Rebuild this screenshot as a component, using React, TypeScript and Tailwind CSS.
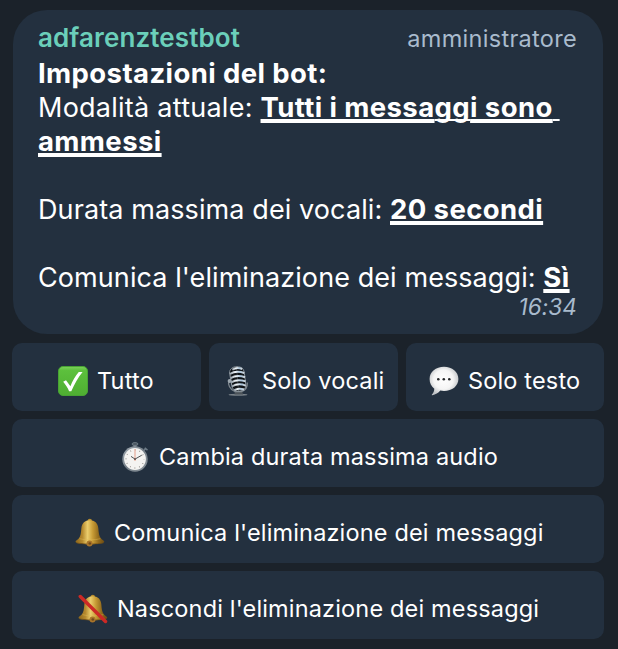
import type { ReactNode } from "react";

function CheckIcon() {
  return (
    <svg width="30" height="30" viewBox="0 0 30 30" className="block shrink-0">
      <defs>
        <linearGradient id="check-bg" x1="0" y1="0" x2="0" y2="1">
          <stop offset="0" stopColor="#7fd35c" />
          <stop offset="0.14" stopColor="#5cc03c" />
          <stop offset="1" stopColor="#4fae32" />
        </linearGradient>
      </defs>
      <rect x="0.5" y="0.5" width="29" height="29" rx="4.5" fill="url(#check-bg)" stroke="#48a334" />
      <path d="M5.200 15.800 8 14.200 12.400 20.200C14.500 14.700 17.500 9.600 20.800 6h3.800C20 11.500 16.500 18 13.300 25.200h-2.200C9.600 21.700 7.600 18.600 5.200 15.800Z" fill="#fff" />
    </svg>
  );
}

function MicIcon() {
  return (
    <svg width="22" height="30" viewBox="0 0 22 30" className="block shrink-0">
      <defs>
        <linearGradient id="mic-bar" x1="0" y1="0" x2="1" y2="0">
          <stop offset="0" stopColor="#8e9aa5" />
          <stop offset="0.35" stopColor="#f4f8fb" />
          <stop offset="0.7" stopColor="#a9c3da" />
          <stop offset="1" stopColor="#d3dae0" />
        </linearGradient>
      </defs>
      <ellipse cx="11" cy="28.800" rx="9.500" ry="1" fill="#777f86" />
      <path d="M8 24h7l1 4.500H7.500Z" fill="#4b5258" />
      <path d="M1.800 14.500c-1 4 1 9 6 11h7c4-1.500 5.700-4.500 5.500-9" fill="none" stroke="#7d868d" strokeWidth="1.300" />
      <path d="M2.500 7C2.500 2.800 6 .6 10 .6s6.700 2 7.300 6l1.500 12c.4 4-2.600 6.200-6.600 6.500-4 .2-7-1.600-7.400-5.600Z" fill="#101418" stroke="#8e98a1" strokeWidth="0.900" />
      <g fill="none" stroke="url(#mic-bar)" strokeWidth="2" strokeLinecap="butt">
        <path d="M5.200 3.600C8 1.800 12 1.500 15.200 3" />
        <path d="M3 7.900c4-2.400 9.500-2.600 14.300-.9" />
        <path d="M3.600 12.100c4-2.400 9.700-2.600 14.400-.9" />
        <path d="M4.200 16.300c4-2.400 9.700-2.600 14.300-.9" />
        <path d="M4.800 20.500c4-2.400 9.500-2.600 13.900-.9" />
        <path d="M7 24.100c3-1.500 7-1.700 10-.6" />
      </g>
      <path d="M3.300 7 5 19.500M9.500 1l2 24" stroke="#dce4ea" strokeWidth="0.500" opacity="0.450" fill="none" />
      <circle cx="2.600" cy="15" r="2" fill="#9ca6ae" />
    </svg>
  );
}

function SpeechIcon() {
  return (
    <svg width="30" height="30" viewBox="0 0 30 30" className="block shrink-0">
      <defs>
        <radialGradient id="speech-bg" cx="0.48" cy="0.45" r="0.56">
          <stop offset="0" stopColor="#fff" />
          <stop offset="0.6" stopColor="#f5f5f5" />
          <stop offset="1" stopColor="#bfc2c5" />
        </radialGradient>
      </defs>
      <path d="M15 .8C23.200.8 29.400 6 29.400 13S23.200 25 15 25c-1.300 0-2.500-.1-3.700-.4C9.400 27 6.500 28.900 3.300 29.200c-.5 0-.7-.4-.3-.8 1.400-1.300 2.200-3.200 2.300-5.700C2.300 20.500.6 17 .6 13 .6 6 6.800.8 15 .8Z" fill="url(#speech-bg)" />
      <circle cx="9.300" cy="13.300" r="1.300" fill="#26282a" />
      <circle cx="14.800" cy="13.300" r="1.300" fill="#26282a" />
      <circle cx="20.300" cy="13.300" r="1.300" fill="#26282a" />
    </svg>
  );
}

function StopwatchIcon() {
  return (
    <svg width="27" height="30" viewBox="0 0 27 30" className="block shrink-0">
      <defs>
        <linearGradient id="watch-rim" x1="0" y1="0" x2="1" y2="1">
          <stop offset="0" stopColor="#a2abb3" />
          <stop offset="0.5" stopColor="#747e87" />
          <stop offset="1" stopColor="#8c959c" />
        </linearGradient>
      </defs>
      <ellipse cx="13" cy="2" rx="3" ry="1.500" fill="#4c5863" stroke="#7d8992" strokeWidth="0.700" />
      <path d="M11.500 3h3v3h-3Z" fill="#707c86" />
      <path d="m21.300 9 2.200-2.300M22.700 5.900l2.800 2.300" stroke="#6f7c87" strokeWidth="1.500" fill="none" />
      <circle cx="13" cy="17" r="12.700" fill="url(#watch-rim)" />
      <circle cx="13" cy="17" r="10.900" fill="#f4f3f1" />
      <circle cx="13" cy="17" r="9" fill="none" stroke="#8a8682" strokeWidth="1.300" strokeDasharray="0.700 4.012" strokeDashoffset="0.350" />
      <path d="M13 19V7" stroke="#e8b5a6" strokeWidth="1.400" />
      <path d="m9 14.400 4 2.700 6.800-3.900" stroke="#3e4244" strokeWidth="0.900" fill="none" />
      <circle cx="13" cy="17.200" r="0.900" fill="#66504a" />
    </svg>
  );
}

function BellIcon({ muted = false }: { muted?: boolean }) {
  return (
    <svg width="30" height="30" viewBox="0 0 30 30" className="block shrink-0">
      <defs>
        <linearGradient id="bell-body" x1="0" y1="0" x2="1" y2="0">
          <stop offset="0" stopColor="#8d671c" />
          <stop offset="0.24" stopColor="#b5892e" />
          <stop offset="0.42" stopColor="#ebcd6c" />
          <stop offset="0.6" stopColor="#c79b35" />
          <stop offset="0.8" stopColor="#926a1c" />
          <stop offset="1" stopColor="#6c4c15" />
        </linearGradient>
      </defs>
      <ellipse cx="14.800" cy="2.300" rx="2.100" ry="1.500" fill="#b98e30" />
      <path d="M14.800 2.200c5 0 8 2.800 8.500 7.800.5 5 .6 8.200 2.700 10.500 1.300 1.300 3.300 2 3.300 3.300 0 1.600-6.300 2.500-14.500 2.500S.5 25.400.5 23.800c0-1.300 1.900-2 3.200-3.300 2.100-2.300 2.200-5.500 2.700-10.500.5-5 3.400-7.800 8.400-7.800Z" fill="url(#bell-body)" />
      <path d="M4.500 20.700c6 1.600 15 1.600 20.800 0" fill="none" stroke="#dfb954" strokeWidth="0.800" opacity="0.600" />
      <path d="M1.500 24.800c5 1.500 21.500 1.500 27 0" fill="none" stroke="#755014" strokeWidth="0.700" />
      <circle cx="14.500" cy="25.400" r="3" fill="#a9742a" />
      <circle cx="14.800" cy="25.500" r="1.300" fill="#704b1b" />
      {muted && <path d="m2.300 2.500 25.200 25" stroke="#cc2925" strokeWidth="3.500" strokeLinecap="round" />}
    </svg>
  );
}

function Value({ children, thin = false }: { children: string; thin?: boolean }) {
  return (
    <b
      className={`whitespace-pre text-[27.5px] leading-none tracking-[0.4px] underline [text-decoration-skip-ink:none] ${
        thin ? "decoration-[2px] underline-offset-[2px]" : "decoration-[4px] underline-offset-[2px]"
      }`}
    >
      {children}
    </b>
  );
}

function KeyButton({ icon, label, className }: { icon: ReactNode; label: string; className: string }) {
  return (
    <button className={`flex h-[68px] items-center rounded-[10px] bg-[#23303f] pt-[7px] text-[23.5px] tracking-[0.16px] ${className}`}>
      {icon}
      <span className="whitespace-nowrap">{label}</span>
    </button>
  );
}

export default function App() {
  return (
    <main className="h-[649px] w-[618px] overflow-hidden bg-[#1b222a] pt-[10px] pl-3 font-['Inter','Liberation_Sans',sans-serif] text-white">
      <section className="ml-px h-[324px] w-[590px] rounded-[34px] bg-[#23303f] pt-[11px] pr-[26px] pl-[25px] text-[27px] leading-[34px]">
        <header className="flex h-[35px] items-baseline justify-between">
          <span className="text-[26px] font-semibold tracking-[0.1px] text-[#6bcfba]">adfarenztestbot</span>
          <span className="text-[23.5px] tracking-[0.3px] text-[#a9bbcd]">amministratore</span>
        </header>
        <div className="whitespace-nowrap">
          <p className="text-[27.5px] font-bold tracking-[0.4px]">Impostazioni del bot:</p>
          <p className="mt-px">
            <span className="tracking-[0.25px]">Modalità attuale: </span>
            <Value>Tutti i messa</Value>
            <Value thin>gg</Value>
            <Value>i sono</Value>
            <Value thin> </Value>
          </p>
          <p><Value>ammessi</Value></p>
          <p className="mt-[34px] tracking-[0.1px]">
            Durata massima dei vocali: <Value>20 secondi</Value>
          </p>
          <p className="mt-[34px] tracking-[0.08px]">
            Comunica l'eliminazione dei messaggi: <Value>Sì</Value>
          </p>
        </div>
        <time className="block text-right text-[22.5px] leading-[24px] tracking-[0.1px] text-[#a9bbcd] italic">16:34</time>
      </section>
      <nav className="mt-[9px] flex w-[592px] flex-col gap-2">
        <div className="flex gap-2">
          <KeyButton className="w-[189px] gap-[9px] pl-[46px]" icon={<CheckIcon />} label="Tutto" />
          <KeyButton className="w-[189px] gap-[13px] pl-[18px]" icon={<MicIcon />} label="Solo vocali" />
          <KeyButton className="w-[198px] gap-[9px] pl-[23px]" icon={<SpeechIcon />} label="Solo testo" />
        </div>
        <KeyButton className="gap-[10px] pl-[110px]" icon={<StopwatchIcon />} label="Cambia durata massima audio" />
        <KeyButton className="gap-[9px] pl-[63px]" icon={<BellIcon />} label="Comunica l'eliminazione dei messaggi" />
        <KeyButton className="gap-[9px] pl-[66px]" icon={<BellIcon muted />} label="Nascondi l'eliminazione dei messaggi" />
      </nav>
    </main>
  );
}
